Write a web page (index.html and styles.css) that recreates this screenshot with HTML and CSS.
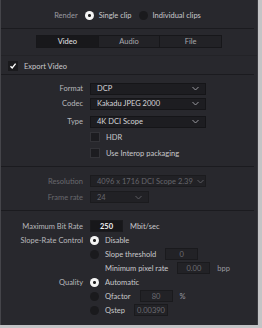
FILE: index.html
```html
<!DOCTYPE html>
<html lang="en">
<head>
  <meta charset="UTF-8" />
  <title>Render Settings</title>
  <link rel="stylesheet" href="styles.css">
</head>
<body>
  <div class="panel">

    <div class="render-row">
      <span class="dim">Render</span>
      <span class="radio on"></span><span>Single clip</span>
      <span class="radio"></span><span>Individual clips</span>
    </div>

    <div class="tabs-area">
      <div class="tabs">
        <div class="tab active">Video</div>
        <div class="tab">Audio</div>
        <div class="tab">File</div>
      </div>
    </div>

    <div class="export-row">
      <span class="check on">
        <svg width="8" height="8" viewBox="0 0 8 8"><path d="M1.5 4.2 L3.2 6 L6.6 1.6" fill="none" stroke="#fff" stroke-width="1.4"/></svg>
      </span>
      <span>Export Video</span>
    </div>

    <div class="section">
      <div class="row">
        <label class="lbl">Format</label>
        <div class="select">DCP<svg class="chev" width="7" height="5" viewBox="0 0 7 5"><path d="M0.5 1 L3.5 4 L6.5 1" fill="none" stroke="#9a9aa0" stroke-width="1"/></svg></div>
      </div>
      <div class="row">
        <label class="lbl">Codec</label>
        <div class="select">Kakadu JPEG 2000<svg class="chev" width="7" height="5" viewBox="0 0 7 5"><path d="M0.5 1 L3.5 4 L6.5 1" fill="none" stroke="#9a9aa0" stroke-width="1"/></svg></div>
      </div>
      <div class="row type-row">
        <label class="lbl">Type</label>
        <div class="select">4K DCI Scope<svg class="chev" width="7" height="5" viewBox="0 0 7 5"><path d="M0.5 1 L3.5 4 L6.5 1" fill="none" stroke="#9a9aa0" stroke-width="1"/></svg></div>
      </div>
      <div class="row opt-row">
        <span class="lbl"></span>
        <span class="check"></span><span>HDR</span>
      </div>
      <div class="row opt-row">
        <span class="lbl"></span>
        <span class="check"></span><span>Use Interop packaging</span>
      </div>
    </div>

    <div class="section disabled">
      <div class="row">
        <label class="lbl">Resolution</label>
        <div class="select">4096 x 1716 DCI Scope 2.39<svg class="chev" width="7" height="5" viewBox="0 0 7 5"><path d="M0.5 1 L3.5 4 L6.5 1" fill="none" stroke="#5c5c62" stroke-width="1"/></svg></div>
      </div>
      <div class="row">
        <label class="lbl">Frame rate</label>
        <div class="select short">24<svg class="chev" width="7" height="5" viewBox="0 0 7 5"><path d="M0.5 1 L3.5 4 L6.5 1" fill="none" stroke="#5c5c62" stroke-width="1"/></svg></div>
      </div>
    </div>

    <div class="section last">
      <div class="row">
        <label class="lbl">Maximum Bit Rate</label>
        <span class="field bright">250</span>
        <span class="unit">Mbit/sec</span>
      </div>
      <div class="row">
        <label class="lbl">Slope-Rate Control</label>
        <span class="radio on"></span><span>Disable</span>
      </div>
      <div class="row">
        <span class="lbl"></span>
        <span class="radio"></span><span>Slope threshold</span>
        <span class="field">0</span>
      </div>
      <div class="row">
        <span class="lbl"></span>
        <span class="indent">Minimum pixel rate</span>
        <span class="field">0.00</span>
        <span class="unit dim">bpp</span>
      </div>
      <div class="row">
        <label class="lbl">Quality</label>
        <span class="radio on"></span><span>Automatic</span>
      </div>
      <div class="row">
        <span class="lbl"></span>
        <span class="radio"></span><span>Qfactor</span>
        <span class="field">80</span>
        <span class="unit dim">%</span>
      </div>
      <div class="row">
        <span class="lbl"></span>
        <span class="radio"></span><span>Qstep</span>
        <span class="field qstep">0.00390</span>
      </div>
    </div>

  </div>
</body>
</html>
```

FILE: styles.css
```css
body {
  margin: 0;
  background-color: #c4c4c6;
  font-family: 'Lato', sans-serif;
  font-size: 7.5px;
  color: #c9c9cc;
  white-space: nowrap;
}

.panel {
  width: 258px;
  height: 325px;
  background-color: #28282d;
  border-left: 1px solid #45454a;
  border-right: 1px solid #3a3a3f;
  box-sizing: border-box;
  overflow: hidden;
}

.dim {
  color: #9a9aa0;
}

.render-row {
  height: 29px;
  display: flex;
  align-items: center;
  justify-content: center;
  gap: 4px;
  padding-top: 3px;
  box-sizing: border-box;
  border-bottom: 1px solid #1b1b1f;
  margin-right: 3px;
}

.render-row .radio {
  margin: 0 1px 0 3px;
}

.radio {
  display: inline-block;
  width: 9px;
  height: 9px;
  border-radius: 50%;
  background-color: #1a1a1d;
  box-sizing: border-box;
  flex: none;
}

.radio.on {
  background: radial-gradient(circle, #222 0 1.3px, #f4f4f4 1.6px);
}

.tabs-area {
  height: 27px;
  padding-top: 6px;
  box-sizing: border-box;
  border-bottom: 1px solid #232327;
}

.tabs {
  display: flex;
  margin-left: 35px;
  width: 186px;
  height: 13px;
  border: 1px solid #17171a;
  box-sizing: border-box;
}

.tab {
  flex: 1;
  display: flex;
  align-items: center;
  justify-content: center;
  background-color: #222226;
  color: #a9a9ae;
  border-left: 1px solid #17171a;
}

.tab:first-child {
  border-left: none;
}

.tab.active {
  background-color: #18181b;
  color: #e4e4e6;
}

.export-row {
  height: 19px;
  display: flex;
  align-items: center;
  gap: 6px;
  padding-left: 7px;
  padding-top: 2px;
  box-sizing: border-box;
  border-bottom: 1px solid #1b1b1f;
  margin-right: 3px;
}

.check {
  display: inline-flex;
  align-items: center;
  justify-content: center;
  width: 8px;
  height: 8px;
  background-color: #1c1c20;
  border: 1px solid #333338;
  flex: none;
}

.check.on {
  background-color: #1a1a1d;
  border-color: #1a1a1d;
}

.section {
  border-bottom: 1px solid #1b1b1f;
  margin-right: 3px;
  padding: 6px 0 5px;
}

.section.last {
  border-bottom: none;
  padding-top: 8px;
}

.row {
  display: flex;
  align-items: center;
  height: 15px;
  gap: 4px;
}

.type-row {
  margin-top: 3px;
}

.opt-row {
  height: 16px;
}

.opt-row .check {
  margin: 0 2px 0 0;
}

.lbl {
  width: 82px;
  text-align: right;
  margin-right: 3px;
  color: #b8b8bc;
  flex: none;
}

.section.last .radio {
  margin-right: 2px;
}

.select {
  width: 116px;
  height: 12px;
  box-sizing: border-box;
  background-color: #1d1d21;
  border: 1px solid #151518;
  display: flex;
  align-items: center;
  gap: 4px;
  padding: 0 6px 0 6px;
  justify-content: space-between;
  color: #d6d6d9;
}

.chev {
  flex: none;
}

.select.short {
  width: 59px;
}

.disabled .lbl {
  color: #68686e;
}

.disabled .select {
  color: #66666c;
  background-color: #212125;
  border-color: #1b1b1e;
}

.disabled .row {
  height: 16px;
}

.field {
  width: 33px;
  height: 12px;
  box-sizing: border-box;
  background-color: #222226;
  border: 1px solid #1a1a1d;
  color: #6c6c72;
  display: flex;
  align-items: center;
  justify-content: center;
  margin-left: 5px;
}

.field.bright {
  background-color: #17171a;
  color: #f2f2f4;
  font-weight: bold;
  margin-left: 0;
}

.field.qstep {
  width: 34px;
}

.unit {
  margin-left: 3px;
}

.indent {
  margin-left: 15px;
}

.section.last .row {
  height: 14px;
}
```
